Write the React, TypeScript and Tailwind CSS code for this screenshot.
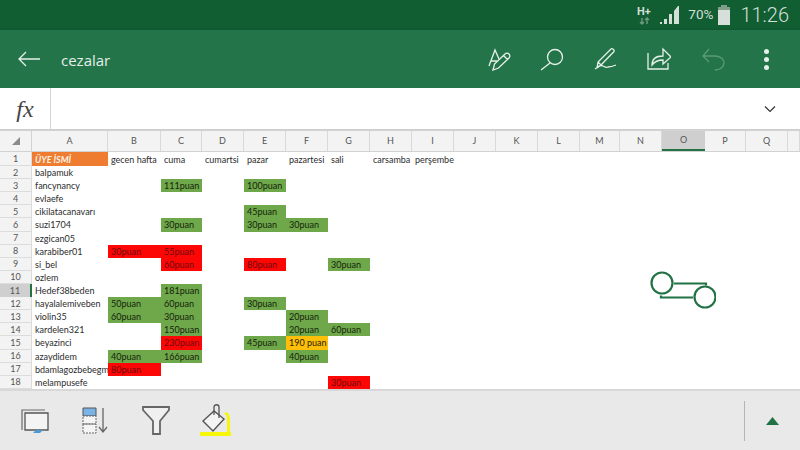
const COLS = ["A", "B", "C", "D", "E", "F", "G", "H", "I", "J", "K", "L", "M", "N", "O", "P", "Q", ""];

type Fill = "g" | "r" | "y";
type Cell = { c: number; t: string; f?: Fill };

// column index: 0 = A, 1 = B, ...
const ROWS: { name: string; cells: Cell[] }[] = [
  {
    name: "",
    cells: [
      { c: 1, t: "gecen hafta" },
      { c: 2, t: "cuma" },
      { c: 3, t: "cumartsi" },
      { c: 4, t: "pazar" },
      { c: 5, t: "pazartesi" },
      { c: 6, t: "sali" },
      { c: 7, t: "carsamba" },
      { c: 8, t: "perşembe" },
    ],
  },
  { name: "balpamuk", cells: [] },
  { name: "fancynancy", cells: [{ c: 2, t: "111puan", f: "g" }, { c: 4, t: "100puan", f: "g" }] },
  { name: "evlaefe", cells: [] },
  { name: "cikilatacanavarı", cells: [{ c: 4, t: "45puan", f: "g" }] },
  { name: "suzi1704", cells: [{ c: 2, t: "30puan", f: "g" }, { c: 4, t: "30puan", f: "g" }, { c: 5, t: "30puan", f: "g" }] },
  { name: "ezgican05", cells: [] },
  { name: "karabiber01", cells: [{ c: 1, t: "30puan", f: "r" }, { c: 2, t: "55puan", f: "r" }] },
  { name: "si_bel", cells: [{ c: 2, t: "60puan", f: "r" }, { c: 4, t: "80puan", f: "r" }, { c: 6, t: "30puan", f: "g" }] },
  { name: "ozlem", cells: [] },
  { name: "Hedef38beden", cells: [{ c: 2, t: "181puan", f: "g" }] },
  { name: "hayalalemiveben", cells: [{ c: 1, t: "50puan", f: "g" }, { c: 2, t: "60puan", f: "g" }, { c: 4, t: "30puan", f: "g" }] },
  { name: "violin35", cells: [{ c: 1, t: "60puan", f: "g" }, { c: 2, t: "30puan", f: "g" }, { c: 5, t: "20puan", f: "g" }] },
  { name: "kardelen321", cells: [{ c: 2, t: "150puan", f: "g" }, { c: 5, t: "20puan", f: "g" }, { c: 6, t: "60puan", f: "g" }] },
  { name: "beyazinci", cells: [{ c: 2, t: "230puan", f: "r" }, { c: 4, t: "45puan", f: "g" }, { c: 5, t: "190 puan", f: "y" }] },
  { name: "azaydidem", cells: [{ c: 1, t: "40puan", f: "g" }, { c: 2, t: "166puan", f: "g" }, { c: 5, t: "40puan", f: "g" }] },
  { name: "bdamlagozbebegm", cells: [{ c: 1, t: "80puan", f: "r" }] },
  { name: "melampusefe", cells: [{ c: 6, t: "30puan", f: "r" }] },
];

const GRID = "grid grid-cols-[32px_76px_53px_41px_42px_42px_42px_42px_42px_42px_42px_42px_42px_40px_42px_43px_41px_42px_12px]";

function fillClass(f?: Fill) {
  if (f === "g") return "bg-[#6ea84a] text-[#16230c]";
  if (f === "r") return "bg-[#fd0606] text-[#6e0c0c]";
  if (f === "y") return "bg-[#fdbf08] text-[#2b2206]";
  return "text-[#2c2c2c]";
}

function StatusBar() {
  return (
    <div className="flex h-[30px] items-center justify-end bg-[#115e33] pr-[11px] font-['Roboto',sans-serif] text-[#d3dfd7]">
      <svg width="18" height="22" viewBox="0 0 18 22" className="mr-[6px]">
        <text x="1" y="11" fontSize="11" fontWeight="700" fontFamily="Roboto, sans-serif" fill="#d3dfd7">H+</text>
        <path d="M6 14v6M4 18l2 2 2-2M11 20v-6M9 16l2-2 2 2" stroke="#6f9c80" strokeWidth="1.4" fill="none" />
      </svg>
      <svg width="20" height="20" viewBox="0 0 20 20" className="mr-[8px]">
        <path d="M0 19h2v-2H0zM4 19h3v-5H4zM9 19h3V9H9zM14 19h5V1h-1l-4 5z" fill="#d3dfd7" />
      </svg>
      <span className="mr-[4px] text-[13.5px] leading-none">70%</span>
      <svg width="14" height="20" viewBox="0 0 14 20" className="mr-[9px]">
        <path d="M4 0h6v2H4z" fill="#7f9f8b" />
        <path d="M1 2h12v3H1z" fill="#7f9f8b" />
        <path d="M1 5h12v15H1z" fill="#d6dfd9" />
      </svg>
      <span className="text-[20px] font-light leading-none">11:26</span>
    </div>
  );
}

function Toolbar() {
  const s = { stroke: "#e6f0ea", strokeWidth: 1.3, fill: "none" };
  return (
    <div className="flex h-[58px] items-center bg-[#237549] shadow-[0_1px_3px_rgba(0,0,0,0.3)]">
      <svg width="24" height="18" viewBox="0 0 24 18" className="ml-[17px] mr-[20px]">
        <path d="M23 9H2M9 2 2 9l7 7" {...s} />
      </svg>
      <span className="pt-[3px] font-['Open_Sans',sans-serif] text-[15px] leading-none text-[#e4efe9]">cezalar</span>
      <div className="ml-auto mr-[31px] flex items-center">
        <svg width="24" height="24" viewBox="0 0 24 24" className="mr-[28px]">
          <path d="M1 19 7 3l4 9M3 14h6" {...s} />
          <path d="M5 23l1.500-6L17 7a2.200 2.200 0 0 1 4 4L10.500 21z M15.500 8.500l4 4" {...s} />
        </svg>
        <svg width="24" height="24" viewBox="0 0 24 24" className="mr-[30px]">
          <circle cx="15" cy="10" r="7.500" {...s} />
          <path d="M10 16 1 23" {...s} />
        </svg>
        <svg width="24" height="24" viewBox="0 0 24 24" className="mr-[29px]">
          <path d="M3 21 4 15 17 2c1-1 4 1 3 2.500L7 18l-4 3M1 22c3-2 5-5 8-3 2 1 3 2 5 1 2 0 3 0 8-2M4 15l3 3" {...s} />
        </svg>
        <svg width="24" height="24" viewBox="0 0 24 24" className="mr-[31px]">
          <path d="M1 6v16h20v-6" {...s} />
          <path d="M5 18c0-6 4-9 11-9V2l8 8-8 7v-4c-5 0-8 1-11 5z" {...s} />
        </svg>
        <svg width="24" height="24" viewBox="0 0 24 24" className="mr-[38px]">
          <path d="M7 2 1 9l6 6M1 9h12c5 0 9 3 9 7s-4 7-9 7" stroke="#5c9a77" strokeWidth="1.300" fill="none" />
        </svg>
        <div className="flex flex-col gap-[3px]">
          <div className="size-[5px] rounded-full bg-[#e6f0ea]" />
          <div className="size-[5px] rounded-full bg-[#e6f0ea]" />
          <div className="size-[5px] rounded-full bg-[#e6f0ea]" />
        </div>
      </div>
    </div>
  );
}

function FormulaBar() {
  return (
    <div className="flex h-[42px] items-stretch border-b border-[#cfcfcf] bg-white">
      <div className="flex w-[51px] items-center justify-center border-r border-[#d4d4d4]">
        <span className="font-['Liberation_Serif',serif] text-[24px] italic leading-none text-[#444]">fx</span>
      </div>
      <div className="ml-auto flex w-[44px] items-center pl-[8px]">
        <svg width="12" height="8" viewBox="0 0 12 8">
          <path d="M1 1.500 6 6.500l5-5" stroke="#333" strokeWidth="1.200" fill="none" />
        </svg>
      </div>
    </div>
  );
}

function Sheet() {
  return (
    <div className="relative flex-1 overflow-hidden bg-white font-['Lato',sans-serif]">
      {/* column letters */}
      <div className={`${GRID} h-[22px] border-y border-[#d2d2d2] bg-[#f3f3f3] text-[9px] text-[#555]`}>
        <div className="flex items-center justify-center border-r border-[#d2d2d2]">
          <svg width="8" height="8" viewBox="0 0 8 8"><path d="M8 0v8H0z" fill="#8a8a8a" /></svg>
        </div>
        {COLS.map((c, i) => (
          <div
            key={i}
            className={
              c === "O"
                ? "flex items-center justify-center border-b-[2px] border-b-[#217346] bg-[#cfcfcf]"
                : "flex items-center justify-center border-r border-[#d9d9d9]"
            }
          >
            {c}
          </div>
        ))}
      </div>

      {ROWS.map((r, i) => (
        <div key={i} className={`${GRID} ${i === 0 ? "h-[14px]" : "h-[13.12px]"} text-[9px] leading-none`}>
          <div
            className={
              i === 10
                ? "flex items-center justify-center border-r-[2px] border-r-[#217346] bg-[#cfcfcf] text-[9px] text-[#555]"
                : "flex items-center justify-center border-r border-b border-[#dcdcdc] bg-[#f3f3f3] text-[9px] text-[#555]"
            }
          >
            {i + 1}
          </div>
          {i === 0 ? (
            <div className="flex items-center bg-[#ee7d31] pl-[3px] font-bold italic text-[#fdf1e3]">ÜYE İSMİ</div>
          ) : (
            <div className="flex items-center whitespace-nowrap pl-[3px] text-[#2c2c2c]">{r.name}</div>
          )}
          {COLS.slice(1).map((_, k) => {
            const cell = r.cells.find((x) => x.c === k + 1);
            return (
              <div
                key={k}
                className={`flex items-center whitespace-nowrap pl-[3px] ${fillClass(cell?.f)}`}
              >
                {cell?.t}
              </div>
            );
          })}
        </div>
      ))}

      {/* connector shape floating over the sheet */}
      <svg width="68" height="42" viewBox="0 0 68 42" className="absolute left-[648px] top-[139px]">
        <circle cx="14" cy="14" r="10.500" stroke="#217346" strokeWidth="2.200" fill="none" />
        <circle cx="57" cy="28" r="10.500" stroke="#217346" strokeWidth="2.200" fill="none" />
        <path d="M26 14.500h32v2M13 26.500v2h32" stroke="#217346" strokeWidth="2.200" fill="none" />
      </svg>
    </div>
  );
}

function BottomBar() {
  return (
    <div className="flex h-[61px] items-center border-t-[2px] border-[#d8d8d8] bg-[#e9e9e9]">
      <svg width="28" height="26" viewBox="0 0 28 26" className="ml-[21px] mr-[33px]">
        <path d="M1 22V2h23" stroke="#6a6a6a" strokeWidth="1.200" fill="none" />
        <path d="M4 5h23v17H4z" fill="#f4f4f4" stroke="#555" strokeWidth="1.300" />
        <path d="M12 25l3-3h7l-3 3z" fill="#4a9ad8" />
      </svg>
      <svg width="28" height="28" viewBox="0 0 28 28" className="mr-[32px]">
        <path d="M1 1h13v8H1z" fill="#7ab4e6" stroke="#555" />
        <path d="M1 9h13v8H1zM1 17h13v9H1z" fill="#f4f4f4" stroke="#666" strokeDasharray="2 1" />
        <path d="M21 1v24M17 20l4 5 4-5" stroke="#666" strokeWidth="1.300" fill="none" />
      </svg>
      <svg width="28" height="29" viewBox="0 0 28 29" className="mr-[30px]">
        <path d="M1 1h26v3l-9 11v13h-7V15L1 4z" fill="#f0f0f0" stroke="#666" strokeWidth="1.800" />
      </svg>
      <svg width="32" height="33" viewBox="0 0 32 33">
        <path d="M0 28h31v4H0z" fill="#f6f60a" />
        <path d="M26 8c3 1 4 4 4 8v12h-3V15c0-3-1-5-3-5z" fill="#f6f60a" />
        <path d="M14 7 3 17l10 10 11-12z" fill="#f4f4f4" stroke="#555" strokeWidth="1.400" />
        <path d="M14 11V3c0-3 5-3 5 0v11" stroke="#555" strokeWidth="1.300" fill="none" />
      </svg>
      <div className="ml-auto mr-[21px] h-[40px] w-px bg-[#b5b5b5]" />
      <svg width="13" height="8" viewBox="0 0 13 8" className="mr-[21px]">
        <path d="M6.500 0 13 8H0z" fill="#217346" />
      </svg>
    </div>
  );
}

export default function App() {
  return (
    <div className="flex h-[450px] w-[800px] flex-col overflow-hidden">
      <StatusBar />
      <Toolbar />
      <FormulaBar />
      <Sheet />
      <BottomBar />
    </div>
  );
}
